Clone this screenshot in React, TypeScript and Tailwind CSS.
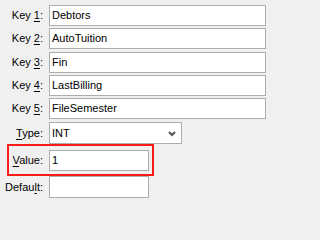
import React from "react";

const font = { fontFamily: '"Liberation Sans", Arial, sans-serif' };

function Label({ pre, acc, post, w = "w-[44px]" }: { pre: string; acc: string; post: string; w?: string }) {
  return (
    <div className={`${w} shrink-0 text-right text-[11px] leading-none text-black pr-[1px]`}>
      {pre}
      <span className="underline underline-offset-[2px] decoration-[1px]">{acc}</span>
      {post}
    </div>
  );
}

function Field({ value, w = "w-[217px]", h = "h-[21px]" }: { value: string; w?: string; h?: string }) {
  return (
    <div className={`${w} ${h} border border-[#adadad] bg-white flex items-center pl-[2px] text-[11px] text-black leading-none`}>
      {value}
    </div>
  );
}

export default function App() {
  return (
    <div className="min-w-[271px] min-h-[202px] w-screen h-screen bg-[#f0f0f0]">
      <div className="w-[271px] h-[202px] bg-[#f0f0f0] overflow-hidden flex flex-col" style={font}>
        <div className="mt-[5px] flex items-center gap-[5px]">
          <Label pre="Key " acc="1" post=":" />
          <Field value="Debtors" />
        </div>
        <div className="mt-[2px] flex items-center gap-[5px]">
          <Label pre="Key " acc="2" post=":" />
          <Field value="AutoTuition" />
        </div>
        <div className="mt-[3px] flex items-center gap-[5px]">
          <Label pre="Key " acc="3" post=":" />
          <Field value="Fin" />
        </div>
        <div className="mt-[2px] flex items-center gap-[5px]">
          <Label pre="Key " acc="4" post=":" />
          <Field value="LastBilling" />
        </div>
        <div className="mt-[2px] flex items-center gap-[5px]">
          <Label pre="Key " acc="5" post=":" />
          <Field value="FileSemester" />
        </div>
        <div className="mt-[3px] flex items-center gap-[5px]">
          <Label pre="" acc="T" post="ype:" />
          <div className="w-[133px] h-[22px] border border-[#adadad] bg-white flex items-center justify-between pl-[2px] pr-[5px] text-[11px] text-black leading-none">
            <span>INT</span>
            <svg width="8" height="6" viewBox="0 0 8 6" className="mt-[1px]">
              <path d="M1 1 L4 4 L7 1" stroke="#555" strokeWidth="2" fill="none" />
            </svg>
          </div>
        </div>
        <div className="ml-[7px] w-[147px] h-[32px] border-2 border-[#ff1a1a] flex items-center gap-[5px]">
          <Label pre="" acc="V" post="alue:" w="w-[35px]" />
          <Field value="1" w="w-[100px]" />
        </div>
        <div className="flex items-center gap-[5px]">
          <Label pre="Defau" acc="l" post="t:" />
          <Field value="" w="w-[100px]" h="h-[22px]" />
        </div>
      </div>
    </div>
  );
}
